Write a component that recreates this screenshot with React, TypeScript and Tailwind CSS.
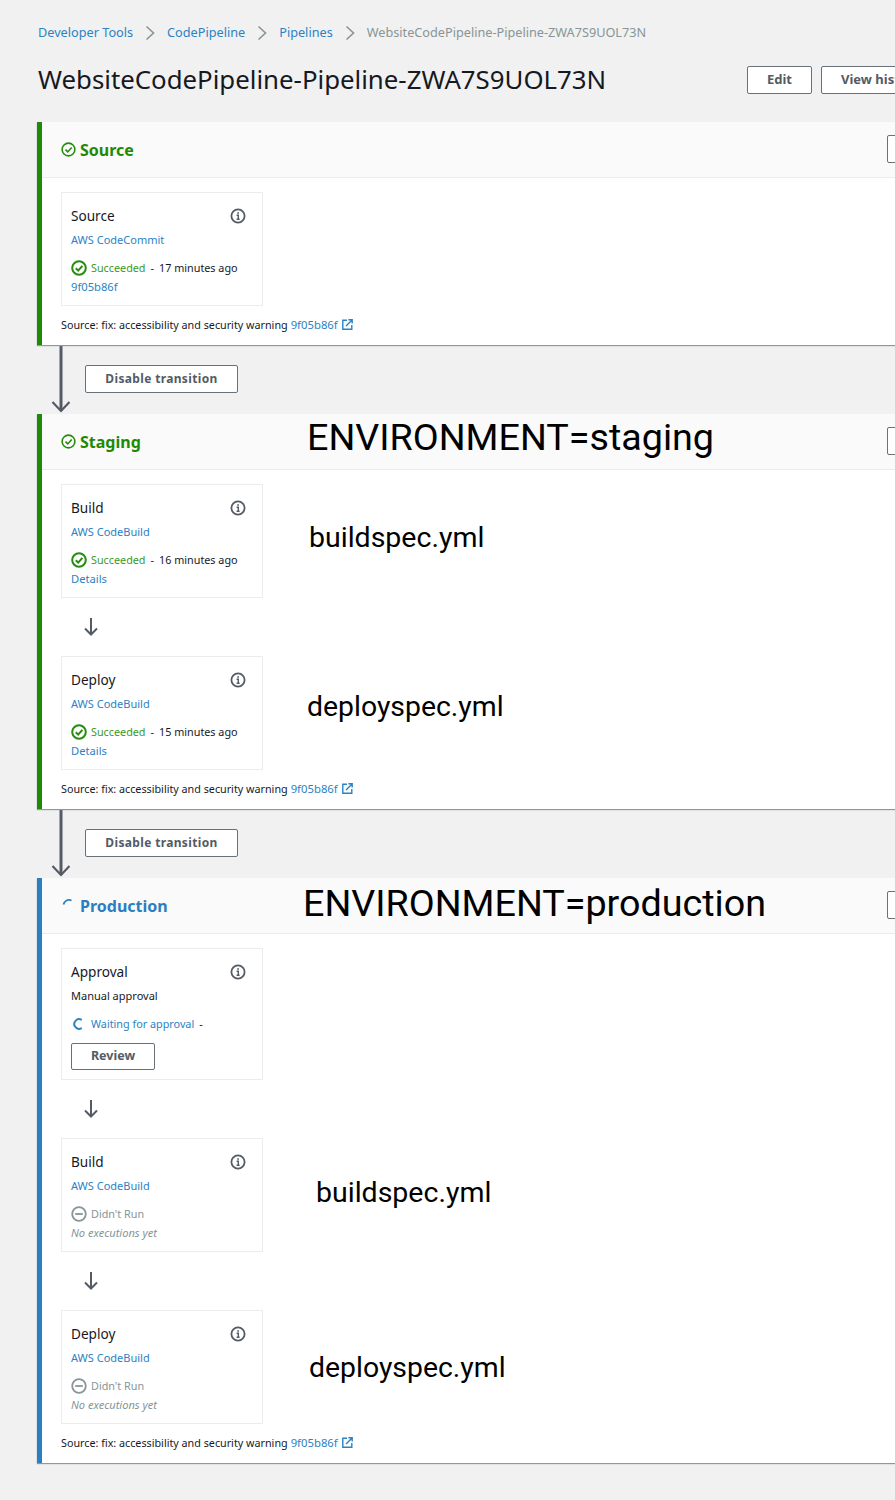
const font = "font-['Noto_Sans',sans-serif]"

function ChevronSep() {
  return (
    <svg width="10" height="16" viewBox="0 0 10 16" fill="none" stroke="#879596" strokeWidth="1.6" className="mx-[12px] shrink-0">
      <path d="M1.5 1.5 8.5 8l-7 6.5" />
    </svg>
  )
}

function CheckCircle({ size = 16, width = 2 }: { size?: number; width?: number }) {
  return (
    <svg width={size} height={size} viewBox="0 0 16 16" fill="none" stroke="#258c0c" strokeWidth={width} className="shrink-0">
      <circle cx="8" cy="8" r="6.8" />
      <path d="M4.8 8.2 7.2 10.6 11.4 5.8" />
    </svg>
  )
}

function InfoIcon() {
  return (
    <svg width="16" height="16" viewBox="0 0 16 16" fill="none" className="shrink-0">
      <circle cx="8" cy="8" r="6.6" stroke="#545b64" strokeWidth="1.8" />
      <path d="M6.6 7.2H8.3V11M6.6 11.2H9.6" stroke="#545b64" strokeWidth="1.4" />
      <rect x="7.3" y="4.2" width="1.6" height="1.6" fill="#545b64" />
    </svg>
  )
}

function ExternalIcon() {
  return (
    <svg width="11" height="11" viewBox="0 0 11 11" fill="none" stroke="#2b82c4" strokeWidth="1.4">
      <path d="M5 1.2H.8v9h9V6" />
      <path d="M4 7 9.6 1.4M6.4 .8h3.8v3.8" />
    </svg>
  )
}

function DownArrow() {
  return (
    <div className="h-[58px] w-[60px] flex items-center justify-center">
      <svg width="14" height="18" viewBox="0 0 14 18" fill="none" stroke="#545b64" strokeWidth="2">
        <path d="M7 0v16.5M1 10.5l6 6 6-6" />
      </svg>
    </div>
  )
}

function Transition() {
  return (
    <div className="h-[69px] pl-[13px] flex">
      <svg width="20" height="69" viewBox="0 0 20 69" fill="none" stroke="#545b64" className="shrink-0">
        <path d="M11 0v66" strokeWidth="3" />
        <path d="M2.5 57 11 66l8.5-9" strokeWidth="2.2" />
      </svg>
      <div className="ml-[15px] mt-[20px]">
        <button className="w-[153px] h-[28px] bg-white border border-[#687078] rounded-[2px] text-[12px] font-bold text-[#545b64] tracking-[0.35px]">
          Disable transition
        </button>
      </div>
    </div>
  )
}

type Status = 'success' | 'waiting' | 'none'

function ActionCard(props: { title: string; provider: string; status: Status; ago?: string; footer?: string; manual?: boolean }) {
  return (
    <div className="w-[202px] border border-[#eaeded] bg-white pl-[9px] pr-[16px] pt-[13px] pb-[10px]">
      <div className="flex items-center justify-between h-[20px]">
        <span className="text-[13.6px] text-[#16191f]">{props.title}</span>
        <InfoIcon />
      </div>
      {props.manual
        ? <div className="text-[11px] leading-[16px] mt-[6px] text-[#16191f]">{props.provider}</div>
        : <div className="text-[11px] leading-[16px] mt-[6px] text-[#2b82c4]">{props.provider}</div>}
      <div className="flex items-center h-[16px] mt-[12px] text-[10.8px] whitespace-nowrap">
        {props.status === 'success' && (
          <>
            <CheckCircle />
            <span className="ml-[4px] text-[#3a9a22]">Succeeded</span>
            <span className="ml-[5px] text-[#16191f]">-</span>
            <span className="ml-[5px] text-[#16191f]">{props.ago}</span>
          </>
        )}
        {props.status === 'waiting' && (
          <>
            <svg width="16" height="16" viewBox="0 0 16 16" fill="none" stroke="#2b82c4" strokeWidth="2" className="shrink-0">
              <path d="M10.8 4A4.8 4.8 0 1 0 10.8 12" />
            </svg>
            <span className="ml-[4px] text-[#2b82c4]">Waiting for approval</span>
            <span className="ml-[5px] text-[#16191f]">-</span>
          </>
        )}
        {props.status === 'none' && (
          <>
            <svg width="16" height="16" viewBox="0 0 16 16" fill="none" stroke="#879596" strokeWidth="1.8" className="shrink-0">
              <circle cx="8" cy="8" r="6.8" />
              <path d="M4.2 8h7.6" />
            </svg>
            <span className="ml-[4px] text-[#879596]">Didn't Run</span>
          </>
        )}
      </div>
      {props.footer && props.status === 'none' && (
        <div className="text-[11.1px] leading-[16px] mt-[3px] italic text-[#879596]">{props.footer}</div>
      )}
      {props.footer && props.status !== 'none' && (
        <div className="text-[11.2px] leading-[16px] mt-[3px] text-[#2b82c4]">{props.footer}</div>
      )}
      {props.manual && (
        <button className="block mt-[11px] -mb-px w-[84px] h-[27px] border border-[#687078] rounded-[2px] text-[12.5px] font-bold text-[#545b64]">
          Review
        </button>
      )}
    </div>
  )
}

function SourceLine() {
  return (
    <div className="flex items-center h-[16px] text-[10.75px] text-[#16191f] whitespace-nowrap">
      Source: fix: accessibility and security warning
      <span className="ml-[3px] text-[11.3px] text-[#2b82c4]">9f05b86f</span>
      <span className="ml-[4px] mb-[2px]"><ExternalIcon /></span>
    </div>
  )
}

function Stage(props: { name: string; color: 'green' | 'blue'; children: React.ReactNode; overlay?: React.ReactNode }) {
  const isGreen = props.color === 'green'
  return (
    <section className={`relative w-[900px] bg-white border-l-[5px] shadow-[0_1px_1px_#8a9aa3] ${isGreen ? 'border-[#1f8a06]' : 'border-[#2b7fc0]'}`}>
      <div className="h-[56px] bg-[#fafafa] border-b border-[#eaeded] pl-[19px] flex items-center relative">
        {isGreen ? <CheckCircle size={15} width={1.7} /> : (
          <svg width="15" height="15" viewBox="0 0 15 15" fill="none" stroke="#2b82c4" strokeWidth="1.8" className="shrink-0">
            <path d="M2.5 6.5A5.5 5.5 0 0 1 10.5 2.5" />
          </svg>
        )}
        <span className={`ml-[4px] text-[16px] font-bold ${isGreen ? 'text-[#1f8a06]' : 'text-[#2b7fc0]'}`}>{props.name}</span>
        <div className="absolute left-[845px] top-[13px] w-[30px] h-[28px] bg-white border border-[#687078] rounded-[2px]" />
      </div>
      <div className="pl-[19px] pt-[14px] pb-[12px]">
        {props.children}
        <div className="mt-[11px]"><SourceLine /></div>
      </div>
      {props.overlay}
    </section>
  )
}

export default function App() {
  return (
    <div className={`${font} w-[895px] h-[1500px] overflow-hidden bg-[#f1f1f1] pl-[37px] pt-[25px]`}>
      <nav className="flex items-center h-[16px] text-[12.7px] whitespace-nowrap pl-px">
        <span className="text-[#2b82c4]">Developer Tools</span>
        <ChevronSep />
        <span className="text-[#2b82c4]">CodePipeline</span>
        <ChevronSep />
        <span className="text-[#2b82c4]">Pipelines</span>
        <ChevronSep />
        <span className="text-[#879596]">WebsiteCodePipeline-Pipeline-ZWA7S9UOL73N</span>
      </nav>
      <div className="flex items-center h-[28px] mt-[25px] mb-[28px] w-[900px] relative">
        <h1 className="text-[25.8px] text-[#16191f] whitespace-nowrap pl-px pb-[2px]">WebsiteCodePipeline-Pipeline-ZWA7S9UOL73N</h1>
        <div className="absolute left-[710px] top-0 flex gap-[9px]">
          <button className="w-[65px] h-[28px] bg-white border border-[#687078] rounded-[2px] text-[13px] font-bold text-[#545b64]">Edit</button>
          <button className="w-[115px] h-[28px] pl-[19px] text-left bg-white border border-[#687078] rounded-[2px] text-[13px] font-bold text-[#545b64] whitespace-nowrap">View history</button>
        </div>
      </div>

      <Stage name="Source" color="green">
        <ActionCard title="Source" provider="AWS CodeCommit" status="success" ago="17 minutes ago" footer="9f05b86f" />
      </Stage>
      <Transition />
      <Stage
        name="Staging"
        color="green"
        overlay={
          <>
            <div className="absolute left-[265px] -top-px h-[48px] leading-[48px] text-[37.7px] text-black font-['Roboto',sans-serif] whitespace-nowrap">ENVIRONMENT=staging</div>
            <div className="absolute left-[267px] top-[104px] leading-[40px] text-[28.5px] text-black font-['Roboto',sans-serif]">buildspec.yml</div>
            <div className="absolute left-[265px] top-[273px] leading-[40px] text-[28.4px] text-black font-['Roboto',sans-serif]">deployspec.yml</div>
          </>
        }
      >
        <ActionCard title="Build" provider="AWS CodeBuild" status="success" ago="16 minutes ago" footer="Details" />
        <DownArrow />
        <ActionCard title="Deploy" provider="AWS CodeBuild" status="success" ago="15 minutes ago" footer="Details" />
      </Stage>
      <Transition />
      <Stage
        name="Production"
        color="blue"
        overlay={
          <>
            <div className="absolute left-[261px] top-[1px] h-[48px] leading-[48px] text-[37.7px] text-black font-['Roboto',sans-serif] whitespace-nowrap">ENVIRONMENT=production</div>
            <div className="absolute left-[274px] top-[295px] leading-[40px] text-[28.5px] text-black font-['Roboto',sans-serif]">buildspec.yml</div>
            <div className="absolute left-[267px] top-[470px] leading-[40px] text-[28.4px] text-black font-['Roboto',sans-serif]">deployspec.yml</div>
          </>
        }
      >
        <ActionCard title="Approval" provider="Manual approval" status="waiting" manual />
        <DownArrow />
        <ActionCard title="Build" provider="AWS CodeBuild" status="none" footer="No executions yet" />
        <DownArrow />
        <ActionCard title="Deploy" provider="AWS CodeBuild" status="none" footer="No executions yet" />
      </Stage>
    </div>
  )
}
